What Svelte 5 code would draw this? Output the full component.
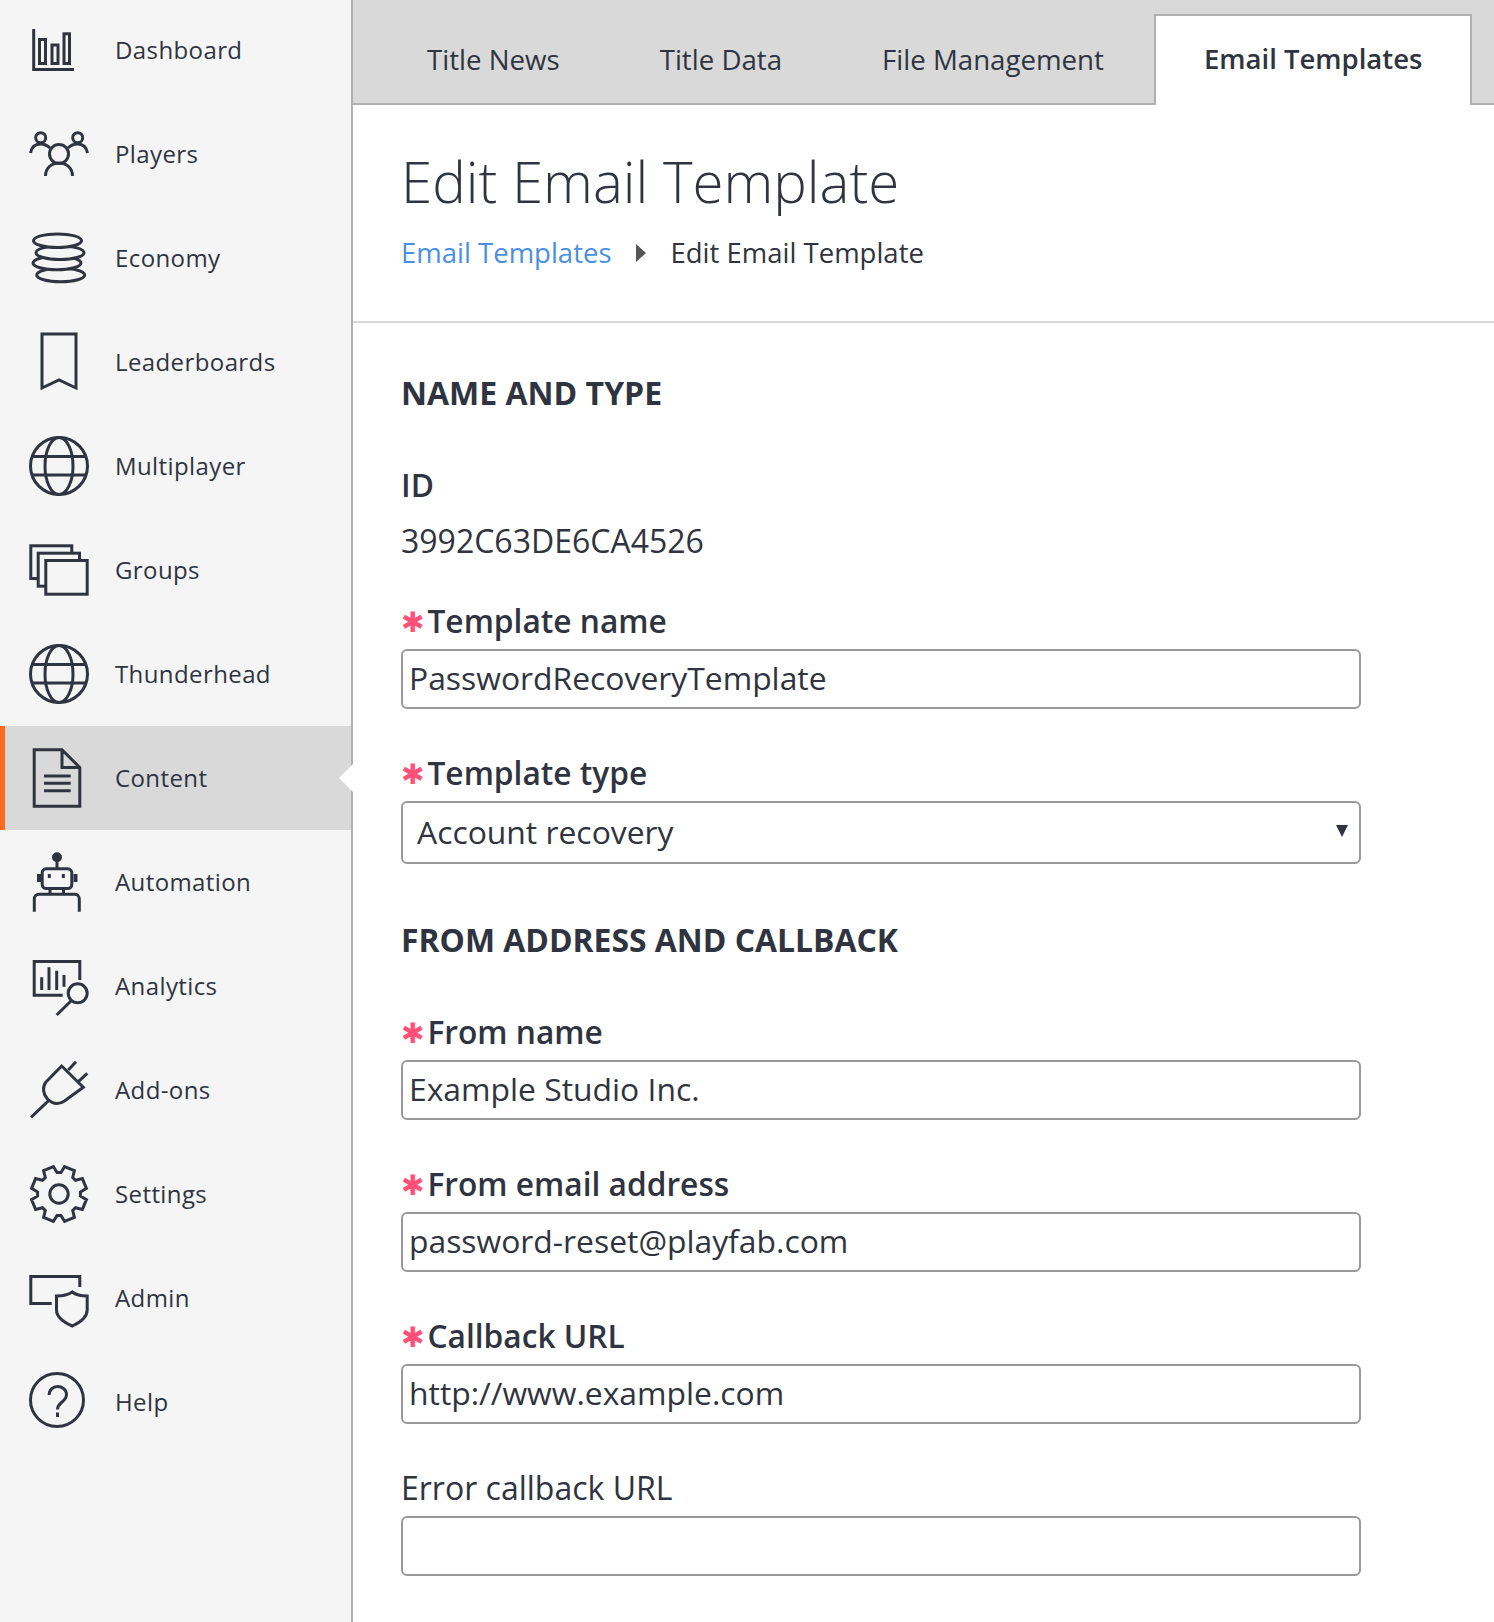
<script lang="ts">
  // 8-tooth gear outline with valleys on the axes
  function gear(cx: number, cy: number) {
    const pts: string[] = [];
    for (let i = 0; i < 8; i++) {
      const a = (i * Math.PI) / 4 + Math.PI / 8;
      for (const [r, d] of [[21.5, -0.3], [28, -0.19], [28, 0.19], [21.5, 0.3]]) {
        pts.push(`${(cx + r * Math.sin(a + d)).toFixed(1)} ${(cy - r * Math.cos(a + d)).toFixed(1)}`);
      }
    }
    return `M${pts.join('L')}Z`;
  }

  const globe =
    '<circle cx="33" cy="32" r="28.5"/><ellipse cx="33" cy="32" rx="14" ry="28.5"/><path d="M6 22.5H60M6 41H60"/>';

  const nav = [
    {
      name: 'Dashboard',
      icon: '<path d="M7.7 11V51.5H48"/><rect x="13.5" y="21.5" width="6" height="24"/><rect x="26" y="27" width="6" height="18.5"/><rect x="38" y="15.8" width="5.5" height="29.7"/>',
    },
    {
      name: 'Players',
      icon: '<circle cx="33" cy="32" r="9.5"/><circle cx="14.7" cy="15.7" r="5"/><circle cx="51.7" cy="15.7" r="5"/><path d="M19.5 54c0-8 6-13 13.5-13s13.5 5 13.5 13M4.5 31c1-6 5-9 10-9 4 0 7 1.5 9.5 4M61.5 31c-1-6-5-9-10-9-4 0-7 1.5-9.5 4"/>',
    },
    {
      name: 'Economy',
      icon: '<g class="solid"><ellipse cx="34.7" cy="49" rx="24" ry="6.8"/><ellipse cx="31" cy="37" rx="24" ry="6.8"/><ellipse cx="34" cy="26.7" rx="24" ry="6.8"/><ellipse cx="31.5" cy="14.7" rx="24" ry="6.8"/></g>',
    },
    { name: 'Leaderboards', icon: '<path d="M16 4H50V58L33 50L16 58Z"/>' },
    { name: 'Multiplayer', icon: globe },
    {
      name: 'Groups',
      icon: '<g class="solid"><rect x="4.8" y="7.8" width="41" height="32.7"/><rect x="12.2" y="15.2" width="41.3" height="33"/><rect x="19.8" y="22.5" width="41.4" height="33.7"/></g>',
    },
    { name: 'Thunderhead', icon: globe },
    {
      name: 'Content',
      icon: '<path d="M8.2 3.8H36L53.8 21.5V60.2H8.2ZM36 3.8V21.5H53.8M18 30H44.7M18 37.3H44.7M18 44.7H44.7"/>',
    },
    {
      name: 'Automation',
      icon: '<circle cx="31" cy="7.3" r="3.5" fill="currentColor"/><path d="M31 10V18"/><rect x="16.2" y="18.8" width="29.6" height="19.7" rx="4"/><path d="M24 38.5V44.3M37.5 38.5V44.3M8.3 61.7V49a4.7 4.7 0 0 1 4.7-4.7H49a4.7 4.7 0 0 1 4.3 4.7V61.7"/><path class="fat" d="M13 24V32M49.5 24V32M21.8 26H24.8M35.8 26H38.8"/>',
    },
    {
      name: 'Analytics',
      icon: '<path d="M53.8 26V7.5H8.2V41.2H36.7M15.7 23.3V36M23 13.3V36M30.7 16.7V36M38 21V32.7M45.5 46.5L30.7 61"/><circle cx="51.7" cy="39.3" r="9.5"/>',
    },
    {
      name: 'Add-ons',
      icon: '<path d="M5 59.3L23.3 42M35.7 8L20 24c-4 5-3 12 1.5 17 5 5 11 6 17 2L57.3 29.3ZM42.3 12L50 3.7M52.3 23.7L61.3 15.3"/>',
    },
    {
      name: 'Settings',
      icon: `<path d="${gear(33, 32)}"/><circle cx="33" cy="32" r="9.2"/>`,
    },
    {
      name: 'Admin',
      icon: '<path d="M53.8 21V10.5H4.8V37.5H25.7M46.3 26C42 29 36 30 30.5 30V44C30.5 51 37 56 46.3 60 55 56 61.2 51 61.2 44V30C56 30 50 29 46.3 26Z"/>',
    },
    {
      name: 'Help',
      icon: '<circle cx="31" cy="30" r="26.5"/><path d="M23 25c0-5 4-8.5 8.5-8.5s9 3 9 8c0 4-2.5 6-5 8-2.5 2-4 3.5-4 7M31.5 42.5V47"/>',
    },
  ];

  const tabs = ['Title News', 'Title Data', 'File Management', 'Email Templates'];
</script>

<div class="page">
  <aside class="sidebar">
    <nav class="nav">
      {#each nav as item}
        <a class="nav-item" class:active={item.name === 'Content'} href="#/">
          <svg class="nav-icon" viewBox="0 0 64 64" width="64" height="64" fill="none" stroke="currentColor" stroke-width="3">
            {@html item.icon}
          </svg>
          <span>{item.name}</span>
        </a>
      {/each}
    </nav>
  </aside>

  <main class="main">
    <div class="tabs">
      {#each tabs as tab}
        <a class="tab" class:current={tab === 'Email Templates'} href="#/">{tab}</a>
      {/each}
    </div>

    <header class="head">
      <h1>Edit Email Template</h1>
      <div class="crumbs">
        <a href="#/">Email Templates</a>
        <i class="crumb-arrow"></i>
        <span>Edit Email Template</span>
      </div>
    </header>

    <form class="form">
      <h2>NAME AND TYPE</h2>
      <div class="field id-field">
        <div class="label">ID</div>
        <div class="value">3992C63DE6CA4526</div>
      </div>
      <div class="field">
        <label class="label" for="tpl-name"><b>✱</b>Template name</label>
        <input id="tpl-name" value="PasswordRecoveryTemplate" />
      </div>
      <div class="field">
        <label class="label" for="tpl-type"><b>✱</b>Template type</label>
        <div class="select-wrap">
          <select id="tpl-type">
            <option>Account recovery</option>
          </select>
          <i class="select-arrow"></i>
        </div>
      </div>

      <h2 class="second">FROM ADDRESS AND CALLBACK</h2>
      <div class="field">
        <label class="label" for="from-name"><b>✱</b>From name</label>
        <input id="from-name" value="Example Studio Inc." />
      </div>
      <div class="field">
        <label class="label" for="from-email"><b>✱</b>From email address</label>
        <input id="from-email" value="password-reset@playfab.com" />
      </div>
      <div class="field">
        <label class="label" for="callback"><b>✱</b>Callback URL</label>
        <input id="callback" value="http://www.example.com" />
      </div>
      <div class="field">
        <label class="label plain" for="err-callback">Error callback URL</label>
        <input id="err-callback" value="" />
      </div>
    </form>
  </main>
</div>

<style>
  :global(body) {
    margin: 0;
    background: #fff;
  }
  .page {
    display: flex;
    height: 1622px;
    overflow: hidden;
    font-family: 'Open Sans', sans-serif;
    color: #2f3440;
  }
  a {
    text-decoration: none;
    color: inherit;
  }

  .sidebar {
    box-sizing: border-box;
    width: 353px;
    flex: none;
    background: #f5f5f5;
    border-right: 2px solid #b0b0b0;
  }
  .nav {
    margin-top: -2px;
    margin-right: -2px;
  }
  .nav-item {
    position: relative;
    box-sizing: border-box;
    display: flex;
    align-items: center;
    gap: 25px;
    height: 104px;
    padding-left: 26px;
    font-size: 24px;
    font-weight: 500;
    letter-spacing: 0.4px;
  }
  .nav-item span {
    margin-bottom: 2px;
  }
  .nav-item.active {
    background: #d9d9d9;
    box-shadow: inset 5px 0 0 #ff6c1f;
    margin-right: 2px;
  }
  .nav-item.active::after {
    content: '';
    position: absolute;
    top: 38px;
    right: -2px;
    border: 14px solid transparent;
    border-left: 0;
    border-right-color: #fff;
  }
  .nav-icon {
    flex: none;
  }
  .nav-icon :global(.solid) {
    fill: #f5f5f5;
  }
  .nav-icon :global(.fat) {
    stroke-width: 4;
  }

  .main {
    flex: 1;
    min-width: 0;
  }
  .tabs {
    box-sizing: border-box;
    display: flex;
    align-items: flex-end;
    height: 105px;
    padding-left: 24px;
    background: #d9d9d9;
    border-bottom: 2px solid #b0b0b0;
  }
  .tab {
    box-sizing: border-box;
    height: 90px;
    padding: 27px 50px 0;
    font-size: 27.65px;
    line-height: 38px;
  }
  .tab.current {
    height: 91px;
    margin-bottom: -2px;
    padding: 24px 48px 0;
    background: #fff;
    border: 2px solid #b0b0b0;
    border-bottom: 0;
    font-size: 27.5px;
    font-weight: 600;
  }

  .head {
    padding: 41px 48px 48px;
    border-bottom: 2px solid #d9d9d9;
  }
  h1 {
    margin: 0 0 15px;
    font-size: 56.4px;
    line-height: 72px;
    font-weight: 300;
  }
  .crumbs {
    display: flex;
    align-items: center;
    font-size: 27.5px;
    line-height: 40px;
  }
  .crumbs a {
    color: #4a90e2;
  }
  .crumb-arrow {
    margin: 0 25px 0 24px;
    border: 9px solid transparent;
    border-left: 10px solid #555;
    border-right: 0;
  }

  .form {
    padding: 50px 48px 0;
  }
  h2 {
    margin: 0 0 52px;
    font-size: 32px;
    line-height: 40px;
    font-weight: 700;
  }
  h2.second {
    margin-top: 56px;
    font-size: 31.9px;
  }
  .field {
    width: 960px;
    margin-bottom: 44px;
  }
  .field:has(.select-wrap) {
    margin-bottom: 0;
  }
  .id-field {
    margin-bottom: 40px;
  }
  .label {
    display: block;
    height: 40px;
    margin-bottom: 8px;
    font-size: 31.7px;
    line-height: 40px;
    font-weight: 600;
  }
  .label.plain {
    font-size: 32px;
    font-weight: 400;
  }
  .label b {
    position: relative;
    top: -1px;
    margin-right: 3px;
    color: #ff5177;
    font-family: 'DejaVu Sans', sans-serif;
    font-size: 28px;
    line-height: 1;
    font-weight: 700;
  }
  .value {
    margin-top: 16px;
    font-size: 32px;
    line-height: 40px;
  }
  input,
  select {
    box-sizing: border-box;
    display: block;
    width: 100%;
    height: 60px;
    padding: 0 6px 3px;
    background: #fff;
    border: 2px solid #999;
    border-radius: 6px;
    outline: 0;
    font: inherit;
    font-size: 31.85px;
    color: inherit;
  }
  select {
    height: 63px;
    padding: 0 14px 2px;
    appearance: none;
  }
  .select-wrap {
    position: relative;
  }
  .select-arrow {
    position: absolute;
    top: 24px;
    right: 13px;
    border: 6px solid transparent;
    border-top: 12px solid #2f3440;
    border-bottom: 0;
  }
</style>
